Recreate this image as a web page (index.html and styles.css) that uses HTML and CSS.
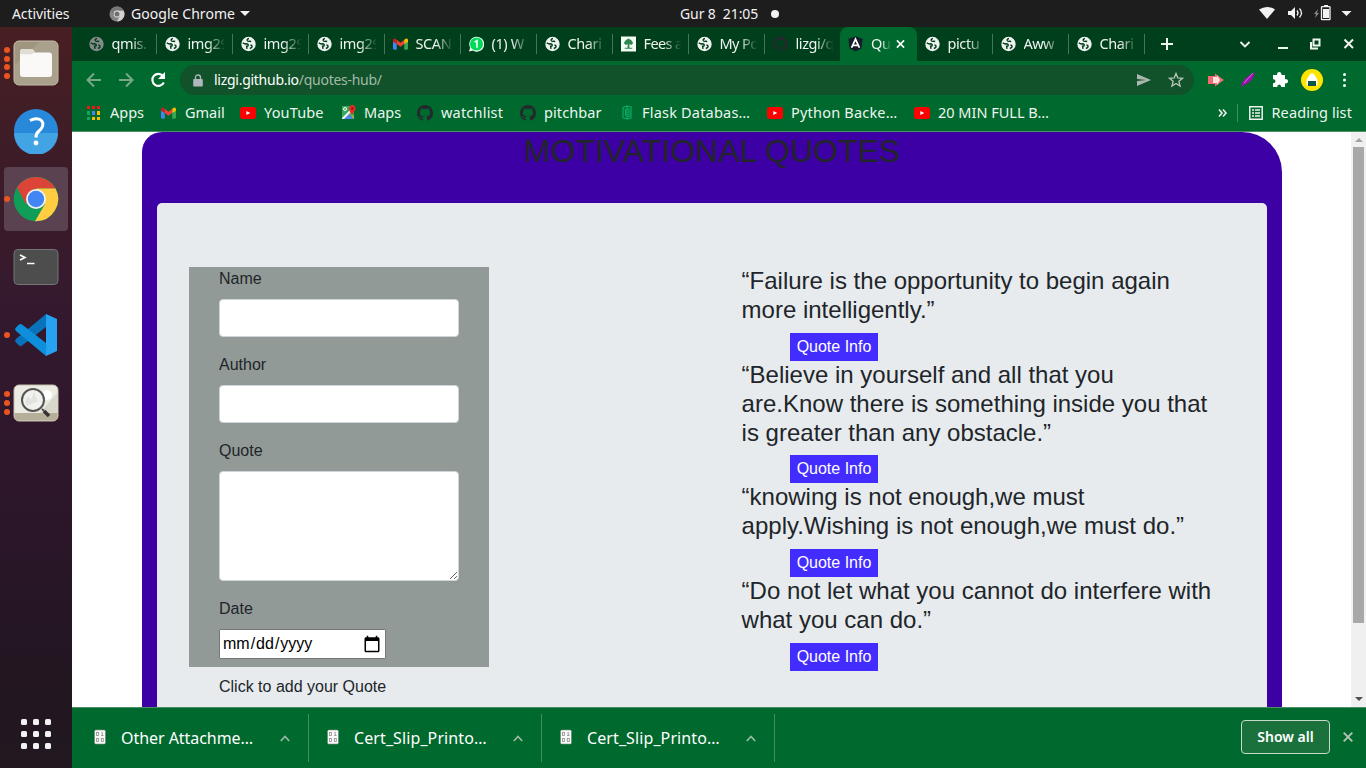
FILE: index.html
```html
<!DOCTYPE html>
<html lang="en">
<head>
<meta charset="utf-8">
<title>Quotes</title>
<link rel="stylesheet" href="styles.css">
</head>
<body>
<svg class="defs" aria-hidden="true">
  <symbol id="globe" viewBox="0 0 15 15"><circle cx="7.5" cy="7.5" r="7.2" fill="currentColor"/><path d="M1.800 6.300 Q3.500 7.800 5.500 7.300 Q7.500 7.300 7.200 8.800 Q7 10 5.600 9.800 L6 12.300 M8 2 Q5.800 2.500 6.200 4 Q7 5.300 8.500 4.700 L10.200 5 M8.800 12 Q11.800 11 10.800 9 L9.400 8.300" fill="none" stroke="var(--cut)" stroke-width="1.400"/></symbol>
  <symbol id="gmail" viewBox="0 0 16 12"><path d="M0 2v8.5Q0 12 1.5 12H4V5z" fill="#4285f4"/><path d="M16 2v8.5q0 1.5-1.500 1.500H12V5z" fill="#34a853"/><path d="M0 2.500V1.800Q.5 0 2.500.3L4 1.500V6L0 3.500z" fill="#c5221f"/><path d="M4 1.500l4 3.200 4-3.200V6L8 9 4 6z" fill="#ea4335"/><path d="M12 1.500L13.500.3Q15.500 0 16 1.800V3.500L12 6z" fill="#fbbc04"/></symbol>
  <symbol id="youtube" viewBox="0 0 16 12"><rect width="16" height="12" rx="2.500" fill="#f00"/><path d="M6.300 4v4l4-2z" fill="#fff"/></symbol>
  <symbol id="github" viewBox="0 0 16 16"><path fill="#24292e" d="M8 0C3.580 0 0 3.580 0 8c0 3.540 2.290 6.530 5.470 7.590.4.070.550-.170.550-.380 0-.190-.010-.820-.010-1.490-2.010.370-2.530-.490-2.690-.940-.090-.230-.480-.940-.820-1.130-.280-.150-.680-.520-.010-.530.630-.010 1.080.580 1.230.820.720 1.210 1.870.870 2.330.660.070-.520.280-.870.510-1.070-1.780-.200-3.640-.890-3.640-3.950 0-.870.310-1.590.820-2.150-.080-.200-.360-1.020.080-2.120 0 0 .670-.210 2.200.820.640-.180 1.320-.270 2-.270s1.360.090 2 .270c1.530-1.040 2.200-.820 2.200-.820.440 1.100.160 1.920.080 2.120.510.560.820 1.270.820 2.150 0 3.070-1.870 3.750-3.650 3.950.290.250.540.730.540 1.480 0 1.070-.010 1.930-.010 2.200 0 .210.150.460.550.380A8 8 0 0 0 16 8c0-4.420-3.580-8-8-8z"/></symbol>
  <symbol id="doc" viewBox="0 0 12 16"><rect x=".3" y=".8" width="11.400" height="14.400" rx="1.500" fill="#f8f8f8" stroke="#004d1d" stroke-width=".5"/><g fill="none" stroke="#8e8e8e" stroke-width=".8"><rect x="2.500" y="3.400" width="2" height="3"/><path d="M7.300 4l1-.7v3.300M7 6.500h2.600"/><rect x="2.500" y="9.400" width="2" height="3"/><rect x="7.300" y="9.400" width="2" height="3"/></g></symbol>
</svg>
<header class="topbar">
  <span class="activities">Activities</span>
  <svg class="chrome-mini" width="16" height="16" viewBox="0 0 16 16"><circle cx="8" cy="8" r="7.500" fill="#858585"/><path d="M8 4.500h6.600A7.500 7.500 0 0 1 8 15.500l3-5.700z" fill="#d2d2d2"/><path d="M1.500 4.400A7.500 7.500 0 0 1 14.600 4.500H8L5 9.500z" fill="#777"/><circle cx="8" cy="8" r="3.400" fill="#ddd"/><circle cx="8" cy="8" r="2.500" fill="#707070"/></svg>
  <span class="app-name">Google Chrome</span><i class="caret"></i>
  <span class="clock">Gur 8&nbsp; 21:05</span><i class="notice"></i>
  <svg class="status" width="110" height="27" viewBox="0 0 110 27"><g fill="#f2f2f2"><path d="M9 9.500Q17 4.500 25 9.500L17 19z"/><path d="M38 11h3l4-4v12l-4-4h-3z"/><path d="M91.500 11h10l-5 5z"/><path d="M68 9l-4 5h2l-1 4 4-5h-2z" fill="#888"/><path d="M74 5h4v2h-4zM73 9h6v9h-6z"/></g><g fill="none" stroke="#f2f2f2" stroke-width="1.300"><path d="M47 10.500q2 2.500 0 5M49.500 8.500q4 4.500 0 9"/><rect x="71.500" y="6.700" width="8.500" height="13" rx=".5"/></g></svg>
</header>
<div class="desktop">
  <nav class="dock">
    <div class="launch"><span class="dots"><i></i><i></i><i></i><i></i></span>
      <svg width="46" height="46" viewBox="0 0 46 46"><rect x="1" y="1" width="44" height="44" rx="5" fill="#a0967f" stroke="#c7c1ae"/><path d="M2 25L27 2h12q5 0 5 5v33q0 4-5 4H7q-5 0-5-5z" fill="#aaa18c"/><path d="M7 12q0-3 3-3h8q2 0 3 2l1 1.500h14q3 0 3 3V34q0 3-3 3H10q-3 0-3-3z" fill="#faf9f8"/><path d="M7 14v-2q0-3 3-3h8q2 0 3 2l1 1.500-4 2z" fill="#e0ddd5"/></svg></div>
    <div class="launch"><svg class="help" width="46" height="46" viewBox="0 0 46 46"><circle cx="23" cy="23" r="22" fill="#2889db"/><path d="M1 25a22 22 0 0 0 44 0z" fill="#43a4e5"/><path d="M17 12.500q5.500-3 10-1 4 2.500 2.500 7-1 2.500-4 5-2.500 2-2.500 6" fill="none" stroke="#fff" stroke-width="3"/><circle cx="23" cy="35" r="2.400" fill="#fff"/></svg></div>
    <div class="launch active"><span class="dots"><i></i></span><svg width="46" height="46" viewBox="0 0 46 46"><circle cx="23" cy="23" r="22.300" fill="#0f9d58"/><path d="M4 11.500A22.300 22.300 0 0 1 42.400 12.500H23L13 28z" fill="#db4437"/><path d="M23 12.500h19.500A22.300 22.300 0 0 1 22 45.300L32 28z" fill="#ffcd40"/><circle cx="23" cy="23" r="10" fill="#f1f1f1"/><circle cx="23" cy="23" r="8.200" fill="#4285f4"/></svg></div>
    <div class="launch"><svg width="46" height="38" viewBox="0 0 46 38"><rect x="1" y="1.500" width="44" height="35" rx="4" fill="#4d4d4d" stroke="#747474"/><path d="M7 7l5 2.500-5 2.500M14 15.500h7.500" fill="none" stroke="#fff" stroke-width="1.600"/></svg></div>
    <div class="launch"><span class="dots"><i></i></span><svg width="44" height="44" viewBox="0 0 44 44"><path d="M1.500 29Q.5 27.500 2 26L32 1v13L8 32.500Q6.500 33.500 5 32.500z" fill="#0873ba"/><path d="M1.500 15Q.5 16.500 2 18L32 43V30L8 11.500Q6.500 10.500 5 11.500z" fill="#0d8fdb"/><path d="M32 1l11 5v32l-11 5z" fill="#27a2f3"/></svg></div>
    <div class="launch"><span class="dots"><i></i><i></i><i></i></span><svg width="46" height="38" viewBox="0 0 46 38"><rect x="1" y="1" width="44" height="36" rx="5" fill="#ebebe3" stroke="#c3bead"/><path d="M26 30L45 8v22z" fill="#d8d7cb"/><path d="M1.500 29h43v3q0 4.500-4 4.500h-35q-4 0-4-4.500z" fill="#b5ae99"/><circle cx="34" cy="11" r="5" fill="#fff"/><circle cx="20" cy="16" r="11" fill="#f1f1ee" stroke="#555" stroke-width="2"/><path d="M14 22q-3-4 1-10l3 4 3-8 4 9" fill="#e2e3de"/><path d="M29 25l2 2" stroke="#555" stroke-width="2"/><path d="M31 27l5 5" stroke="#333" stroke-width="3.500"/></svg></div>
    <div class="apps"><i></i><i></i><i></i><i></i><i></i><i></i><i></i><i></i><i></i></div>
  </nav>
  <main class="window">
    <div class="tabs">
      <div class="tab dim"><svg><use href="#globe"/></svg><span>qmis.</span></div>
      <div class="tab"><svg><use href="#globe"/></svg><span>img29</span></div>
      <div class="tab"><svg><use href="#globe"/></svg><span>img29</span></div>
      <div class="tab"><svg><use href="#globe"/></svg><span>img29</span></div>
      <div class="tab"><svg><use href="#gmail"/></svg><span>SCAN</span></div>
      <div class="tab"><svg viewBox="0 0 16 16"><path d="M0 16l1.200-4A8 8 0 1 1 4 15z" fill="#fff"/><circle cx="8" cy="8" r="7" fill="#00d95a"/><path d="M6 6l2.500-1.500V12" fill="none" stroke="#fff" stroke-width="1.700"/></svg><span>(1) W</span></div>
      <div class="tab"><svg><use href="#globe"/></svg><span>Chari</span></div>
      <div class="tab"><svg viewBox="0 0 16 16"><path d="M0 0h16v16H0z" fill="#f4fbf4"/><path d="M8 2l3 2 2 3-2 2-2-1v4h3v1H4v-1h3V8L5 9 3 7l2-3z" fill="#2f8652"/></svg><span class="tight">Fees a</span></div>
      <div class="tab"><svg><use href="#globe"/></svg><span class="tight">My Po</span></div>
      <div class="tab last"><svg><use href="#github"/></svg><span>lizgi/q</span></div>
      <div class="tab current"><svg viewBox="0 0 16 16"><path d="M8 0l7.500 2.500-1 10L8 16l-6.500-3.500-1-10z" fill="#151c2a"/><path d="M3.800 12L8 2.800 12.200 12M5.500 9.500h5" fill="none" stroke="#fff" stroke-width="1.900"/></svg><span>Qu</span><svg class="x" viewBox="0 0 10 10"><path d="M1 1l8 8M9 1L1 9"/></svg></div>
      <div class="tab"><svg><use href="#globe"/></svg><span>pictu</span></div>
      <div class="tab"><svg><use href="#globe"/></svg><span class="tight">Aww</span></div>
      <div class="tab"><svg><use href="#globe"/></svg><span>Chari</span></div>
      <svg class="controls" width="221" height="34" viewBox="0 0 221 34"><g fill="none" stroke="#eef5f0" stroke-width="2"><path d="M16 17h12M22 11v12"/><path d="M95.500 15l4.500 4.500 4.500-4.500" stroke-width="1.800"/><path d="M133 21h10"/><path d="M168.500 12.500h6v6h-6zM166 15v6.500h7"/><path d="M199.500 12.500l8.500 8.500M208 12.500L199.500 21"/></g></svg>
    </div>
    <div class="toolbar">
      <svg class="nav" width="108" height="38" viewBox="0 0 108 38"><g fill="none" stroke-width="2"><g stroke="#79a889"><path d="M29 19H16M22 12.500L15.500 19l6.500 6.500"/><path d="M47 19h13M54 12.500l6.500 6.500-6.500 6.500"/></g><path d="M91 15a6 6 0 1 0 .8 6.500" stroke="#fff" stroke-width="2.200"/><path d="M93 11v7h-7z" fill="#fff"/></g></svg>
      <div class="address">
        <svg width="10" height="13" viewBox="0 0 10 13"><path d="M1 5h8q.8 0 .8.800v6q0 .8-.8.800H1q-.8 0-.8-.8v-6Q.2 5 1 5z" fill="#b0b8be"/><path d="M2.500 5V3.500q0-2.500 2.500-2.500t2.500 2.500V5" fill="none" stroke="#b0b8be" stroke-width="1.300"/></svg>
        <span class="url"><b>lizgi.github.io</b>/quotes-hub/</span>
        <svg class="address-tools" width="48" height="18" viewBox="0 0 48 18"><path d="M1 3l14 6-14 6v-5l9-1-9-1z" fill="#aab9ad"/><path d="M40 2.500l1.800 4.400 4.700.4-3.600 3 1.100 4.700-4-2.500-4 2.500 1.100-4.700-3.600-3 4.700-.4z" fill="none" stroke="#b5c4b8" stroke-width="1.400"/></svg>
      </div>
      <svg class="extensions" width="170" height="38" viewBox="0 0 170 38"><path d="M12 15h7v-2.500l9 6.500-9 6.500V23h-7z" fill="#f06a70"/><path d="M17 16h4v-2l3 5-3 5v-2h-4z" fill="#fff" opacity=".8"/><path d="M45 26q1-9 14-15-2 10-11 13z" fill="#9c10ac"/><path d="M48 22L57 12" stroke="#d36adf" fill="none"/><path d="M77 14h4q0-3 2.200-3T85.500 14H89v4q3 0 3 2.200T89 22.500V26h-3.800q0-2.500-2-2.500t-2 2.500H77v-3.800q2.500 0 2.500-2T77 18z" fill="#fff"/><circle cx="116" cy="19" r="11" fill="#ffe400"/><path d="M116 12q2 0 5.500 7v4q0 2-2 2h-7q-2 0-2-2v-4q3.500-7 5.500-7z" fill="#fff"/><path d="M112 20h8v5h-8z" fill="#075348"/><g fill="#fff"><circle cx="148.500" cy="13.500" r="1.500"/><circle cx="148.500" cy="19" r="1.500"/><circle cx="148.500" cy="24.500" r="1.500"/></g></svg>
    </div>
    <div class="bookmarks">
      <div class="mark m1"><svg width="13" height="14" viewBox="0 0 13 14"><path d="M0 0h3v3H0zM5 0h3v3H5zM10 0h3v3h-3z" fill="#f01616"/><path d="M0 5h3v4H0zM0 11h3v3H0z" fill="#13a75b"/><path d="M5 5h3v4H5z" fill="#4285f4"/><path d="M10 5h3v4h-3zM5 11h3v3H5zM10 11h3v3h-3z" fill="#fbbc04"/></svg><span>Apps</span></div>
      <div class="mark m2"><svg width="15" height="12"><use href="#gmail"/></svg><span>Gmail</span></div>
      <div class="mark m3"><svg width="16" height="12"><use href="#youtube"/></svg><span>YouTube</span></div>
      <div class="mark m4"><svg width="15" height="15" viewBox="0 0 15 15"><path d="M1 1h12v13H1z" fill="#39a85a"/><path d="M2 14L7.500 8.500 13 14z" fill="#5085ed"/><path d="M1 13L13 1v3L3 14H1z" fill="#f5f5f5"/><path d="M9 8l4 4v2z" fill="#fbbc04"/><circle cx="4" cy="4" r="1.500" fill="none" stroke="#fff"/><path d="M11 10L8.500 6Q7 2 9.500.5t4.500 1Q15.500 4 13.500 6z" fill="#e62d25"/><circle cx="11.300" cy="3.500" r="1.200" fill="#8c1713"/></svg><span>Maps</span></div>
      <div class="mark m5"><svg width="16" height="16"><use href="#github"/></svg><span>watchlist</span></div>
      <div class="mark m6"><svg width="16" height="16"><use href="#github"/></svg><span>pitchbar</span></div>
      <div class="mark m7"><svg width="10" height="15" viewBox="0 0 10 15"><path d="M5 1L1 2.500v10L5 14M3.500 4v7M5 4h2M5 1l4 1v11l-4 1zM5 11.500h2v-8" fill="none" stroke="#0bab68" stroke-width="1.200"/></svg><span>Flask Databas…</span></div>
      <div class="mark m8"><svg width="16" height="12"><use href="#youtube"/></svg><span>Python Backe…</span></div>
      <div class="mark m9"><svg width="16" height="12"><use href="#youtube"/></svg><span>20 MIN FULL B…</span></div>
      <svg class="more" width="10" height="10" viewBox="0 0 10 10"><path d="M1 1.500L4 5 1 8.500M5 1.500L8 5 5 8.500" fill="none" stroke="#eef5f0" stroke-width="1.600"/></svg>
      <div class="reading"><svg width="14" height="14" viewBox="0 0 14 14"><path d="M.8.8h12.400v12.400H.8zM3 4h2M6 4h5M3 7h2M6 7h5M3 10h2M6 10h5" fill="none" stroke="#eef5f0" stroke-width="1.500"/></svg><span>Reading list</span></div>
    </div>
    <div class="viewport">
      <div class="page">
        <div class="container">
          <h1>MOTIVATIONAL QUOTES</h1>
          <section class="jumbotron">
            <form class="quote-form">
              <label>Name</label><input class="control" type="text">
              <label>Author</label><input class="control" type="text">
              <label>Quote</label><textarea class="control area"></textarea>
              <label>Date</label><input class="date" type="date">
              <p>Click to add your Quote</p>
            </form>
            <div class="quotes">
              <h4>“Failure is the opportunity to begin again more intelligently.”</h4><button>Quote Info</button>
              <h4>“Believe in yourself and all that you are.Know there is something inside you that is greater than any obstacle.”</h4><button>Quote Info</button>
              <h4>“knowing is not enough,we must apply.Wishing is not enough,we must do.”</h4><button>Quote Info</button>
              <h4>“Do not let what you cannot do interfere with what you can do.”</h4><button>Quote Info</button>
            </div>
          </section>
        </div>
      </div>
      <div class="scrollbar"><i class="up"></i><i class="thumb"></i><i class="down"></i></div>
    </div>
    <footer class="downloads">
      <div class="download"><svg width="12" height="16"><use href="#doc"/></svg><span class="wide">Other Attachme…</span><svg class="chev" width="10" height="7" viewBox="0 0 10 7"><path d="M.8 6L5 1.500 9.200 6"/></svg></div>
      <div class="download"><svg width="12" height="16"><use href="#doc"/></svg><span>Cert_Slip_Printo…</span><svg class="chev" width="10" height="7" viewBox="0 0 10 7"><path d="M.8 6L5 1.500 9.200 6"/></svg></div>
      <div class="download"><svg width="12" height="16"><use href="#doc"/></svg><span>Cert_Slip_Printo…</span><svg class="chev" width="10" height="7" viewBox="0 0 10 7"><path d="M.8 6L5 1.500 9.200 6"/></svg></div>
      <button class="show-all">Show all</button>
      <svg class="close" width="10" height="10" viewBox="0 0 10 10"><path d="M.7.7l8.600 8.600M9.300.7L.7 9.300" stroke="#b0c6b5" stroke-width="1.900"/></svg>
    </footer>
  </main>
</div>
</body>
</html>
```
FILE: styles.css
```css
* { box-sizing: border-box; }
body { margin: 0; width: 1366px; height: 768px; overflow: hidden; font: 15px "Noto Sans", "Open Sans", sans-serif; color: #fff; }
svg { display: block; flex: none; }
span { white-space: nowrap; }
.defs { position: absolute; width: 0; height: 0; }

.topbar { height: 27px; background: #1d1d1d; display: flex; align-items: center; color: #f2f2f2; font-size: 14px; letter-spacing: -.1px; }
.activities { width: 97px; padding-left: 12px; }
.chrome-mini { margin-left: 12px; }
.app-name { margin-left: 6px; width: 105px; letter-spacing: .05px; }
.caret { margin-left: 4px; border: 5px solid transparent; border-top-color: #f2f2f2; border-bottom: 0; }
.clock { margin-left: 430px; width: 79px; }
.notice { width: 8px; height: 8px; border-radius: 50%; background: #f2f2f2; margin-left: 12px; }
.status { margin-left: auto; margin-right: 6px; }

.desktop { display: flex; height: 741px; }
.dock { width: 72px; padding: 4px; background: linear-gradient(#481f22 0, #3d1c28 18%, #34192e 38%, #2e162b 60%, #231622 85%, #211820); display: flex; flex-direction: column; gap: 4px; }
.launch { position: relative; width: 64px; height: 64px; border-radius: 4px; display: flex; align-items: center; justify-content: center; }
.launch .help { margin-top: -1px; }
.launch.active { background: #5b4250; }
.dots { position: absolute; left: 0; top: 0; height: 64px; display: flex; flex-direction: column; gap: 2.700px; justify-content: center; }
.dots i { width: 6px; height: 6px; flex: none; border-radius: 50%; background: #e95420; }
.apps { margin: auto auto 15px; display: grid; grid-template-columns: repeat(3, 6px); gap: 6px; }
.apps i { height: 6px; border-radius: 1.500px; background: #f2f2f2; }

.window { width: 1294px; display: flex; flex-direction: column; background: #00692d; }
.tabs { height: 34px; display: flex; padding-left: 8px; background: #003f1b; --cut: #003f1b; }
.tab { position: relative; width: 76px; height: 34px; padding-left: 8.500px; display: flex; align-items: center; color: #eef3ef; }
.tab:not(.current):not(.last)::after { content: ""; position: absolute; right: -1px; top: 7px; width: 1px; height: 20px; background: #477456; }
.tab svg { width: 15px; height: 16px; }
.tab.dim svg { color: #858b88; }
.tab > span { margin-left: 8px; margin-top: -3px; width: 39px; font-size: 14.500px; letter-spacing: -.4px; mask-image: linear-gradient(90deg, #000 50%, transparent 96%); }
.tab > .tight { letter-spacing: -.6px; }
.tab.current { padding-left: 8px; background: #00692d; border-radius: 8px 8px 0 0; margin-right: -.5px; width: 76.500px; }
.tab.current > span { width: 21px; }
.tab .x { width: 9px; height: 10px; margin-left: 4px; stroke: #fff; stroke-width: 1.700; }
.controls { margin-left: auto; }

.toolbar { height: 38px; display: flex; align-items: center; }
.address { width: 1014px; height: 30px; border-radius: 15px; background: #11522a; display: flex; align-items: center; padding: 0 10px 0 13px; }
.url { margin-left: 11px; margin-top: -2px; color: #a2b9a8; font-size: 14px; letter-spacing: -.27px; }
.url b { color: #fff; font-weight: 400; }
.address-tools { margin-left: auto; }
.extensions { margin-left: 2px; }

.bookmarks { height: 33px; border-bottom: 1px solid #4b9065; display: flex; align-items: center; padding: 0 14px 5px; font-size: 14.500px; color: #eef5f0; }
.mark { display: flex; align-items: center; flex: none; }
.mark svg { margin-right: 8px; }
.mark span, .reading span { margin-top: -1px; }
.m1 { width: 75px; } .m1 svg { margin: 0 10px 0 1px; }
.m2 { width: 79px; } .m2 svg { margin-right: 9px; }
.m3 { width: 101px; } .m3 span { letter-spacing: .15px; }
.m4 { width: 76px; }
.m5 { width: 103px; } .m5 span { letter-spacing: .2px; }
.m6 { width: 101px; } .m6 span { letter-spacing: .1px; }
.m7 { width: 146px; } .m7 svg { margin: 0 10px 0 1px; } .m7 span { letter-spacing: .2px; }
.m8 { width: 147px; } .m8 span { letter-spacing: .2px; }
.m9 { width: 150px; }
.more { margin-left: auto; }
.reading { display: flex; align-items: center; gap: 9px; margin-left: 9px; padding-left: 11px; border-left: 1px solid #408e5e; height: 18px; }
.reading span { letter-spacing: .1px; }

.viewport { height: 575px; overflow: hidden; display: flex; background: #fff; }
.page { width: 1280px; font: 16px/24px "Liberation Sans", Arial, sans-serif; color: #212529; }
.container { width: 1140px; height: 700px; margin-left: 70px; padding: 0 15px; background: #3d00a5; border-radius: 20px 40px 0 0; }
h1 { margin: 0 0 32.600px; font-size: 32px; line-height: 38.400px; font-weight: 400; text-align: center; }
.jumbotron { height: 620px; padding: 64px 32px; background: #e7ebee; border-radius: 5px; display: flex; }
.quote-form { width: 300px; height: 400px; padding: 0 30px; background: #929a98; }
.quote-form label { display: block; margin-bottom: 8px; }
.control { display: block; width: 240px; height: 38px; border: 1px solid #ced4da; border-radius: 4px; margin: 0 0 16px; padding: 6px 12px; background: #fff; }
.area { height: 110px; }
.date { display: block; width: 167px; height: 30px; font: 16px "Liberation Sans", Arial, sans-serif; }
.date::-webkit-calendar-picker-indicator { width: 18px; height: 18px; padding: 0; margin-right: 3px; background-size: 18px 18px; }
.quote-form p { margin: 16px 0 0; }
.quotes { margin-left: 252.600px; padding-top: .4px; width: 478px; }
h4 { margin: 0 0 8px; font-size: 24px; line-height: 28.800px; font-weight: 400; }
.quotes button { display: block; width: 88px; height: 28px; margin-left: 48.400px; padding: 0; border: 0; background: #432cff; color: #fff; font: 16px "Liberation Sans", Arial, sans-serif; }
.scrollbar { width: 15px; background: #f0f0f0; margin-left: -1px; display: flex; flex-direction: column; align-items: center; }
.scrollbar .up { margin-top: 6px; border: 4px solid transparent; border-top: 0; border-bottom-color: #a3a3a3; }
.scrollbar .thumb { width: 11px; height: 476px; margin-top: 5px; background: #a8a8a8; }
.scrollbar .down { margin-top: auto; margin-bottom: 6px; border: 4px solid transparent; border-bottom: 0; border-top-color: #505050; }

.downloads { height: 61px; border-top: 1px solid #4b9065; display: flex; align-items: center; }
.download { width: 233px; height: 48px; display: flex; align-items: center; padding-left: 18px; border-right: 1px solid #408e5e; }
.download > svg:first-child { margin-top: -2px; }
.download:first-child { width: 237px; padding-left: 22px; }
.download span { width: 145px; margin-left: 15px; font-size: 16px; letter-spacing: .1px; }
.download .wide { letter-spacing: -.05px; }
.chev { margin-left: 14px; }
.chev path { fill: none; stroke: #9cb9a5; stroke-width: 1.700; }
.show-all { margin-left: auto; width: 89px; height: 34px; margin-top: -2px; border: 1px solid #c5dacb; border-radius: 4px; background: #1a713b; color: #fff; font: 600 14px "Noto Sans", sans-serif; padding-bottom: 3px; }
.close { margin: -2px 13px 0; }
```
